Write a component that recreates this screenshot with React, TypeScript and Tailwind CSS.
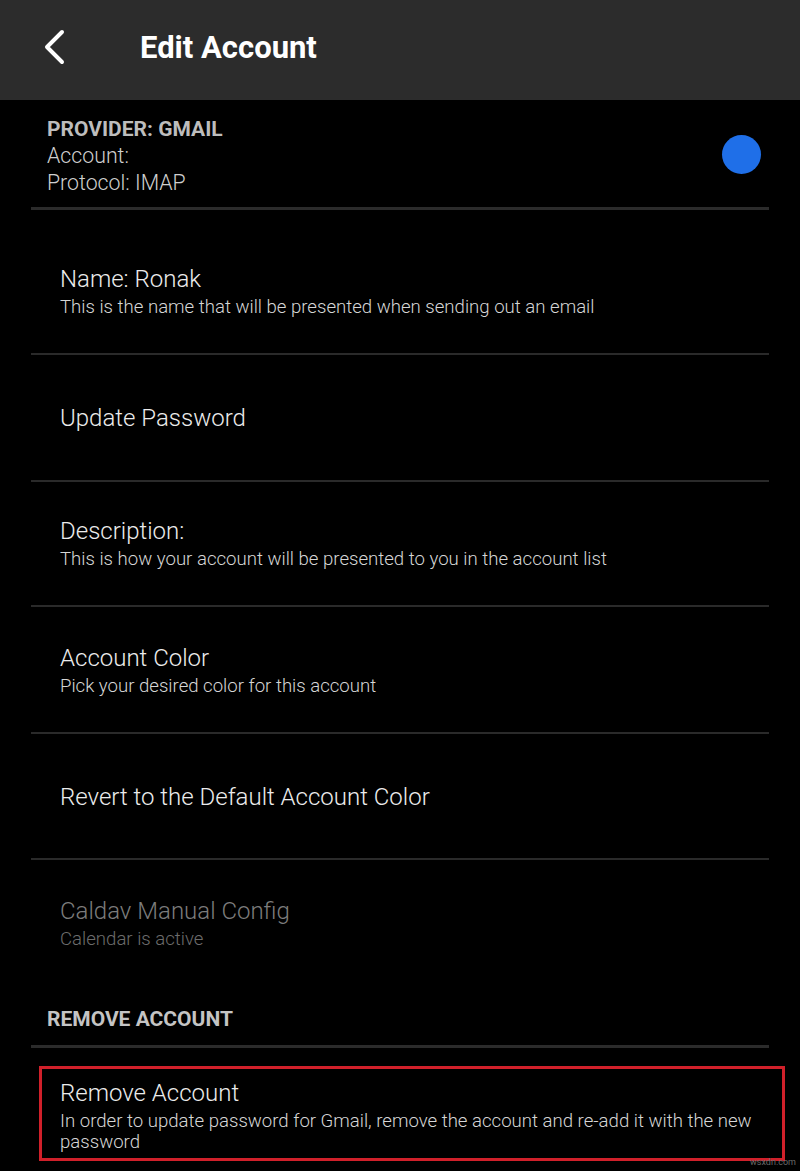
import React from "react";

const font = { fontFamily: "Roboto, 'Noto Sans', Arial, sans-serif" };

function Row({
  title,
  sub,
  pt,
  pb,
  dim,
}: {
  title: string;
  sub?: string;
  pt: string;
  pb: string;
  dim?: boolean;
}) {
  return (
    <div className={`px-[60px] ${pt} ${pb}`}>
      <div
        className={`text-[24px] leading-[30px] font-light ${
          dim ? "text-[#7c7c7c]" : "text-[#ececec]"
        }`}
      >
        {title}
      </div>
      {sub && (
        <div
          className={`mt-[2px] text-[18.6px] leading-[22px] font-light ${
            dim ? "text-[#6c6c6c]" : "text-[#d6d6d6]"
          }`}
        >
          {sub}
        </div>
      )}
    </div>
  );
}

function Divider() {
  return <div className="mx-[31px] h-[2px] bg-[#2a2a2a]" />;
}

export default function App() {
  return (
    <div className="relative min-h-[1171px] w-[800px] bg-black" style={font}>
      <div className="flex h-[100px] items-center bg-[#2c2c2c]">
        <svg
          width="24"
          height="36"
          viewBox="0 0 24 36"
          className="ml-[42px] mt-[-6px]"
        >
          <path
            d="M20 3 L5 18 L20 33"
            fill="none"
            stroke="#ffffff"
            strokeWidth="4"
            strokeLinecap="round"
            strokeLinejoin="round"
          />
        </svg>
        <div className="ml-[74px] mt-[-3px] text-[31px] font-bold text-white">
          Edit Account
        </div>
      </div>

      <div className="flex items-center justify-between pl-[47px] pr-[39px] pt-[16px] pb-[11px]">
        <div>
          <div className="text-[21px] leading-[26px] font-bold text-[#bdbdbd]">
            PROVIDER: GMAIL
          </div>
          <div className="mt-[1px] text-[21.3px] leading-[26px] font-light text-[#cfcfcf]">
            Account:
          </div>
          <div className="mt-[1px] text-[21.3px] leading-[26px] font-light text-[#cfcfcf]">
            Protocol: IMAP
          </div>
        </div>
        <div className="mt-[-3px] h-[39px] w-[39px] rounded-full bg-[#1f6fe8]" />
      </div>
      <div className="mx-[31px] h-[3px] bg-[#2b2b2b]" />

      <Row
        title="Name: Ronak"
        sub="This is the name that will be presented when sending out an email"
        pt="pt-[54px]"
        pb="pb-[35px]"
      />
      <Divider />
      <Row title="Update Password" pt="pt-[48px]" pb="pb-[47px]" />
      <Divider />
      <Row
        title="Description:"
        sub="This is how your account will be presented to you in the account list"
        pt="pt-[34px]"
        pb="pb-[35px]"
      />
      <Divider />
      <Row
        title="Account Color"
        sub="Pick your desired color for this account"
        pt="pt-[36px]"
        pb="pb-[35px]"
      />
      <Divider />
      <Row
        title="Revert to the Default Account Color"
        pt="pt-[48px]"
        pb="pb-[46px]"
      />
      <Divider />
      <Row
        title="Caldav Manual Config"
        sub="Calendar is active"
        pt="pt-[36px]"
        pb="pb-[0px]"
        dim
      />

      <div className="mt-[56px] pl-[47px] text-[21px] leading-[26px] font-bold text-[#c4c4c4]">
        REMOVE ACCOUNT
      </div>
      <div className="mx-[31px] mt-[13px] h-[3px] bg-[#2b2b2b]" />

      <div className="ml-[39px] mr-[15px] mt-[18px] border-[3px] border-[#d0202a] pl-[18px] pr-[10px] pt-[9px] pb-[5px]">
        <div className="text-[24px] leading-[30px] font-light text-[#ececec]">
          Remove Account
        </div>
        <div className="mt-[3px] text-[18.6px] leading-[21px] font-light text-[#d6d6d6]">
          In order to update password for Gmail, remove the account and re-add
          it with the new password
        </div>
      </div>

      <div className="absolute bottom-[2px] right-[4px] text-[9px] text-[#6a6a6a]">
        wsxdn.com
      </div>
    </div>
  );
}
